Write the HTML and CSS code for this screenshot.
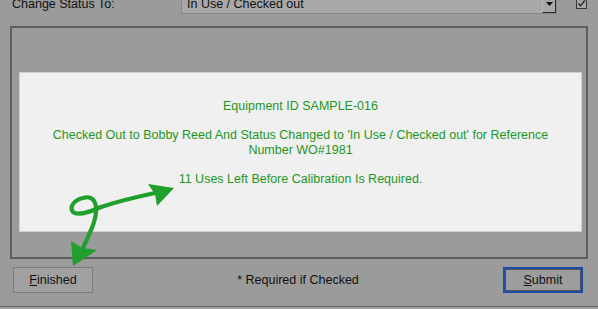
FILE: index.html
```html
<!DOCTYPE html>
<html lang="en">
<head>
  <meta charset="UTF-8" />
  <title>Change Status</title>
  <link rel="stylesheet" href="styles.css">
</head>
<body>

  <div class="window">
    <div class="top-row">
      <span class="label">Change Status To:</span>
      <div class="combo">
        <span class="combo-text">In Use / Checked out</span>
        <span class="combo-btn">
          <svg width="7" height="4" viewBox="0 0 7 4"><path d="M0 0 H7 L3.5 4 Z" fill="#111"/></svg>
        </span>
      </div>
      <span class="check">
        <svg width="9" height="9" viewBox="0 0 9 9"><path d="M1.5 4.5 L3.5 6.8 L7.8 1.5" fill="none" stroke="#222" stroke-width="1.3"/></svg>
      </span>
    </div>

    <div class="group">
      <div class="message">
        <p>Equipment ID SAMPLE-016</p>
        <p>Checked Out to Bobby Reed And Status Changed to 'In Use / Checked out' for Reference Number WO#1981</p>
        <p>11 Uses Left Before Calibration Is Required.</p>
      </div>
    </div>

    <div class="bottom-row">
      <button class="btn"><u>F</u>inished</button>
      <span class="note">* Required if Checked</span>
      <button class="btn default"><u>S</u>ubmit</button>
    </div>
  </div>

  <svg class="arrows" width="598" height="309" viewBox="0 0 598 309">
    <path d="M83 248 C90 232, 97 220, 96 207 C95 198, 89 196, 83 198 C74 200, 69 207, 73 212 C77 216, 90 212, 101 207 C119 201, 136 197, 155 193"
          fill="none" stroke="#1f9f2c" stroke-width="4.2" stroke-linecap="round"/>
    <polygon points="174,188 148,184 155,194 157,206" fill="#1f9f2c"/>
    <polygon points="73,266 71,241 82,248 97,250" fill="#1f9f2c"/>
  </svg>

</body>
</html>
```

FILE: styles.css
```css
body {
  margin: 0;
  background-color: #a2a2a2;
  font-family: 'Liberation Sans', Arial, sans-serif;
  font-size: 12.5px;
  color: #111;
  position: relative;
  width: 598px;
  height: 309px;
  overflow: hidden;
}

.window {
  margin-top: -7px;
  background-color: #9b9b9b;
  border-bottom: 1px solid #5f5f5f;
  padding-bottom: 13px;
}

.top-row {
  display: flex;
  align-items: center;
  height: 21px;
}

.label {
  width: 169px;
  padding-left: 12px;
}

.combo {
  width: 374px;
  height: 19px;
  display: flex;
  align-items: center;
  background-color: #a8a8a8;
  border: 1px solid #858585;
}

.combo-text {
  flex: 1;
  padding-left: 5px;
}

.combo-btn {
  width: 14px;
  height: 18px;
  display: flex;
  align-items: center;
  justify-content: center;
  box-sizing: border-box;
  border-left: 1px solid #b8b8b8;
  border-right: 1px solid #2e2e2e;
  border-bottom: 1px solid #2e2e2e;
  margin-top: 1px;
}

.check {
  width: 11px;
  height: 11px;
  margin-left: 19px;
  box-sizing: border-box;
  border: 1px solid #3a3a3a;
  background-color: #a6a6a6;
  display: flex;
  align-items: center;
  justify-content: center;
}

.group {
  margin: 12px 10px 0 10px;
  border: 2px solid #5e5e5e;
  padding: 44px 4px 25px 7px;
}

.message {
  height: 160px;
  box-sizing: border-box;
  background-color: #f0f0f0;
  border: 1px solid #cfcfcf;
  padding: 26px 12px 0 12px;
  text-align: center;
  color: #1f961f;
  line-height: 14.5px;
}

.message p {
  margin: 0 0 14.5px 0;
}

.bottom-row {
  display: flex;
  align-items: center;
  justify-content: space-between;
  margin-top: 8px;
  padding: 0 15px 0 13px;
}

.btn {
  width: 80px;
  height: 26px;
  font-family: inherit;
  font-size: 12.5px;
  color: #111;
  background-color: #a0a0a0;
  border: 1px solid #7c7c7c;
  padding: 0;
}

.btn.default {
  border: 2px solid #1c4da6;
  box-shadow: inset 0 0 0 1px #555;
  background-color: #9d9d9d;
}

.arrows {
  position: absolute;
  top: 0;
  left: 0;
  pointer-events: none;
}
```
